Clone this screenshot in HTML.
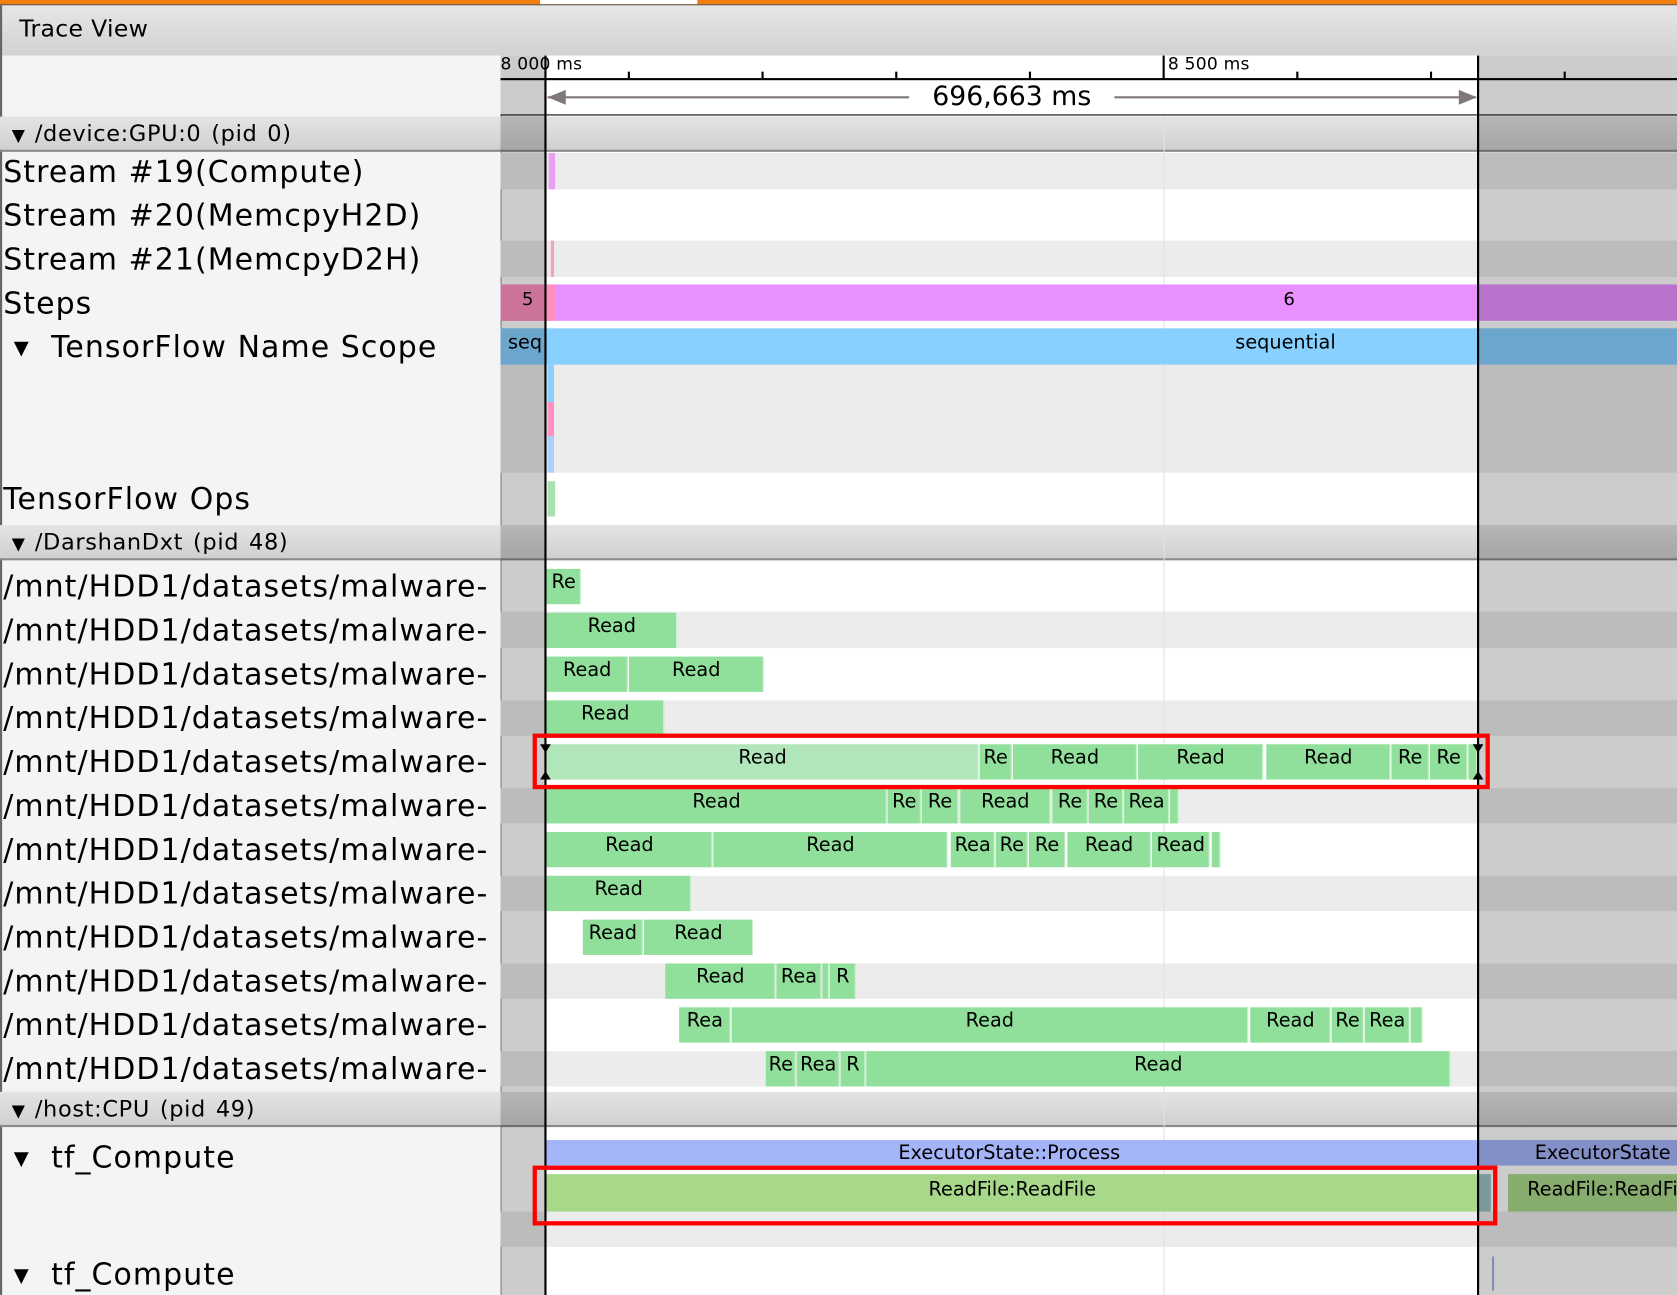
<!DOCTYPE html>
<html><head><meta charset="utf-8"><style>
html,body{margin:0;padding:0;width:1677px;height:1295px;overflow:hidden;background:#fff}
#w{position:absolute;left:0;top:0;width:1568px;height:1211px;transform:scale(1.06952,1.06935);transform-origin:0 0;font-family:"DejaVu Sans","Liberation Sans",sans-serif;overflow:hidden;background:#fff}
.a{position:absolute}
.lbl{position:absolute;left:3px;font-size:28px;color:#000;white-space:nowrap;line-height:34px;letter-spacing:1px}
.hdr{position:absolute;left:0;width:1568px;height:31px;background:linear-gradient(#e4e4e4,#d0d0d0);border-bottom:2px solid #8a8a8a}
.hdr span{position:absolute;left:11px;top:2px;font-size:21px;line-height:28px;letter-spacing:0.6px;word-spacing:2px}
.g{position:absolute;left:468px;width:1100px;background:#ececec}
.b{position:absolute;height:33px;background:#90df9a;font-size:18px;line-height:25px;text-align:center;overflow:hidden;white-space:nowrap;box-shadow:inset -1px 0 0 #c8f0cc}
</style></head><body><div id="w">
<div class="a" style="left:0;top:0;width:1568px;height:5px;background:#f07f10"></div>
<div class="a" style="left:505px;top:0;width:147px;height:4px;background:#fff"></div>
<div class="a" style="left:0;top:4px;width:1568px;height:1px;background:#555"></div>
<div class="a" style="left:0;top:5px;width:1568px;height:47px;background:linear-gradient(#e6e6e6,#d2d2d2)"></div>
<div class="a" style="left:18px;top:14px;font-size:22px;line-height:28px;letter-spacing:0.3px">Trace View</div>
<div class="a" style="left:0;top:52px;width:468px;height:1159px;background:#f3f4f6"></div>
<div class="a" style="left:0;top:5px;width:2px;height:1206px;background:#666"></div>
<div class="a" style="left:468px;top:52px;width:1px;height:1159px;background:#999"></div>
<!-- ruler -->
<div class="a" style="left:468px;top:52px;width:1100px;height:56px;background:#fff"></div>
<div class="a" style="left:468px;top:73px;width:1100px;height:2px;background:#000"></div>
<div class="a" style="left:468px;top:107px;width:1100px;height:1px;background:#000"></div>
<div class="a" style="left:468px;top:50px;font-size:16px;letter-spacing:0.2px">8 000 ms</div>
<div class="a" style="left:1092px;top:50px;font-size:16px;letter-spacing:0.2px">8 500 ms</div>
<div class="a" style="left:1087px;top:52px;width:2px;height:22px;background:#000"></div>
<div class="a" style="left:587px;top:67px;width:2px;height:6px;background:#000"></div>
<div class="a" style="left:712px;top:67px;width:2px;height:6px;background:#000"></div>
<div class="a" style="left:837px;top:67px;width:2px;height:6px;background:#000"></div>
<div class="a" style="left:962px;top:67px;width:2px;height:6px;background:#000"></div>
<div class="a" style="left:1212px;top:67px;width:2px;height:6px;background:#000"></div>
<div class="a" style="left:1337px;top:67px;width:2px;height:6px;background:#000"></div>
<div class="a" style="left:1462px;top:67px;width:2px;height:6px;background:#000"></div>
<div class="a" style="left:512px;top:90px;width:338px;height:2px;background:#807878"></div>
<div class="a" style="left:1042px;top:90px;width:338px;height:2px;background:#807878"></div>
<div class="a" style="left:512px;top:84px;width:0;height:0;border-top:7px solid transparent;border-bottom:7px solid transparent;border-right:17px solid #807878"></div>
<div class="a" style="left:1364px;top:84px;width:0;height:0;border-top:7px solid transparent;border-bottom:7px solid transparent;border-left:17px solid #807878"></div>
<div class="a" style="left:850px;top:74px;width:192px;text-align:center;font-size:25px;line-height:32px">696,663 ms</div>
<!-- headers -->
<div class="hdr" style="top:109px"><span><span style="position:static;font-size:16px;letter-spacing:0">▼</span> /device:GPU:0 (pid 0)</span></div>
<div class="hdr" style="top:491px"><span><span style="position:static;font-size:16px;letter-spacing:0">▼</span> /DarshanDxt (pid 48)</span></div>
<div class="hdr" style="top:1021px"><span><span style="position:static;font-size:16px;letter-spacing:0">▼</span> /host:CPU (pid 49)</span></div>
<!-- stripes -->
<div class="g" style="top:143px;height:34px"></div>
<div class="g" style="top:225px;height:34px"></div>
<div class="g" style="top:341px;height:101px"></div>
<div class="g" style="top:572px;height:34px"></div>
<div class="g" style="top:655px;height:33px"></div>
<div class="g" style="top:737px;height:33px"></div>
<div class="g" style="top:819px;height:33px"></div>
<div class="g" style="top:901px;height:33px"></div>
<div class="g" style="top:983px;height:33px"></div>
<div class="g" style="top:1133px;height:33px"></div>
<div class="a" style="left:1088px;top:108px;width:1px;height:1103px;background:#e2e2e2"></div>
<!-- GPU bars -->
<div class="a" style="left:513px;top:143px;width:6px;height:34px;background:#e8a0f0"></div>
<div class="a" style="left:515px;top:225px;width:3px;height:34px;background:#f4a0c8"></div>
<div class="a" style="left:468px;top:266px;width:1100px;height:34px;background:#e890ff"></div>
<div class="a" style="left:468px;top:266px;width:51px;height:34px;background:#ff90c0"></div>
<div class="a" style="left:488px;top:270px;font-size:17px">5</div>
<div class="a" style="left:1200px;top:270px;font-size:17px">6</div>
<div class="a" style="left:468px;top:307px;width:1100px;height:34px;background:#87d0ff"></div>
<div class="a" style="left:475px;top:310px;font-size:18px">seq</div>
<div class="a" style="left:1155px;top:310px;font-size:18px">sequential</div>
<div class="a" style="left:512px;top:341px;width:6px;height:35px;background:#87d0ff"></div>
<div class="a" style="left:512px;top:376px;width:6px;height:32px;background:#ff90c0"></div>
<div class="a" style="left:512px;top:408px;width:6px;height:34px;background:#a8d0ff"></div>
<div class="a" style="left:512px;top:450px;width:7px;height:33px;background:#a8e0b0"></div>
<!-- labels -->
<div class="lbl" style="top:144px">Stream #19(Compute)</div>
<div class="lbl" style="top:185px">Stream #20(MemcpyH2D)</div>
<div class="lbl" style="top:226px">Stream #21(MemcpyD2H)</div>
<div class="lbl" style="top:267px">Steps</div>
<div class="lbl" style="top:308px">&nbsp;▾&nbsp; TensorFlow Name Scope</div>
<div class="lbl" style="top:450px">TensorFlow Ops</div>
<div class="lbl" style="top:532px">/mnt/HDD1/datasets/malware-</div>
<div class="lbl" style="top:573px">/mnt/HDD1/datasets/malware-</div>
<div class="lbl" style="top:614px">/mnt/HDD1/datasets/malware-</div>
<div class="lbl" style="top:655px">/mnt/HDD1/datasets/malware-</div>
<div class="lbl" style="top:696px">/mnt/HDD1/datasets/malware-</div>
<div class="lbl" style="top:737px">/mnt/HDD1/datasets/malware-</div>
<div class="lbl" style="top:778px">/mnt/HDD1/datasets/malware-</div>
<div class="lbl" style="top:819px">/mnt/HDD1/datasets/malware-</div>
<div class="lbl" style="top:860px">/mnt/HDD1/datasets/malware-</div>
<div class="lbl" style="top:901px">/mnt/HDD1/datasets/malware-</div>
<div class="lbl" style="top:942px">/mnt/HDD1/datasets/malware-</div>
<div class="lbl" style="top:983px">/mnt/HDD1/datasets/malware-</div>
<div class="lbl" style="top:1066px">&nbsp;▾&nbsp; tf_Compute</div>
<div class="lbl" style="top:1175px">&nbsp;▾&nbsp; tf_Compute</div>
<!-- darshan bars -->
<div class="b" style="top:532px;left:511px;width:32px">Re</div>
<div class="b" style="top:573px;left:511px;width:122px">Read</div>
<div class="b" style="top:614px;left:511px;width:76px">Read</div><div class="b" style="top:614px;left:588px;width:126px">Read</div>
<div class="b" style="top:655px;left:511px;width:110px">Read</div>
<div class="b" style="top:696px;left:511px;width:404px;background:#b0e6ba">Read</div><div class="b" style="top:696px;left:916px;width:30px">Re</div><div class="b" style="top:696px;left:947px;width:116px">Read</div><div class="b" style="top:696px;left:1064px;width:117px">Read</div><div class="b" style="top:696px;left:1184px;width:116px">Read</div><div class="b" style="top:696px;left:1301px;width:35px">Re</div><div class="b" style="top:696px;left:1337px;width:35px">Re</div><div class="b" style="top:696px;left:1373px;width:8px"></div>
<div class="b" style="top:737px;left:511px;width:318px">Read</div><div class="b" style="top:737px;left:830px;width:31px">Re</div><div class="b" style="top:737px;left:862px;width:34px">Re</div><div class="b" style="top:737px;left:898px;width:84px">Read</div><div class="b" style="top:737px;left:984px;width:33px">Re</div><div class="b" style="top:737px;left:1018px;width:32px">Re</div><div class="b" style="top:737px;left:1051px;width:42px">Rea</div><div class="b" style="top:737px;left:1094px;width:8px"></div>
<div class="b" style="top:778px;left:511px;width:155px">Read</div><div class="b" style="top:778px;left:667px;width:219px">Read</div><div class="b" style="top:778px;left:889px;width:41px">Rea</div><div class="b" style="top:778px;left:931px;width:30px">Re</div><div class="b" style="top:778px;left:962px;width:34px">Re</div><div class="b" style="top:778px;left:998px;width:78px">Read</div><div class="b" style="top:778px;left:1077px;width:54px">Read</div><div class="b" style="top:778px;left:1133px;width:8px"></div>
<div class="b" style="top:819px;left:511px;width:135px">Read</div>
<div class="b" style="top:860px;left:545px;width:56px">Read</div><div class="b" style="top:860px;left:602px;width:102px">Read</div>
<div class="b" style="top:901px;left:622px;width:103px">Read</div><div class="b" style="top:901px;left:726px;width:42px">Rea</div><div class="b" style="top:901px;left:769px;width:6px"></div><div class="b" style="top:901px;left:776px;width:24px">R</div>
<div class="b" style="top:942px;left:635px;width:48px">Rea</div><div class="b" style="top:942px;left:684px;width:483px">Read</div><div class="b" style="top:942px;left:1169px;width:75px">Read</div><div class="b" style="top:942px;left:1245px;width:30px">Re</div><div class="b" style="top:942px;left:1276px;width:42px">Rea</div><div class="b" style="top:942px;left:1319px;width:11px"></div>
<div class="b" style="top:983px;left:716px;width:28px">Re</div><div class="b" style="top:983px;left:745px;width:40px">Rea</div><div class="b" style="top:983px;left:786px;width:23px">R</div><div class="b" style="top:983px;left:810px;width:546px">Read</div>
<!-- CPU -->
<div class="a" style="left:511px;top:1066px;width:1057px;height:24px;background:#a4b4f9;font-size:18px;line-height:26px;white-space:nowrap"><span style="position:absolute;left:329px">ExecutorState::Process</span><span style="position:absolute;left:924px">ExecutorState</span></div>
<div class="a" style="left:511px;top:1098px;width:871px;height:35px;background:#a8d88a;font-size:18px;line-height:30px;text-align:center">ReadFile:ReadFile</div>
<div class="a" style="left:1382px;top:1098px;width:12px;height:35px;background:#9ac0c0"></div>
<div class="a" style="left:1410px;top:1098px;width:158px;height:35px;background:#a8d88a;font-size:18px;line-height:30px;white-space:nowrap;overflow:hidden;padding-left:18px;box-sizing:border-box">ReadFile:ReadFile</div>
<div class="a" style="left:1395px;top:1175px;width:2px;height:32px;background:#a4b4e0"></div>
<!-- overlays -->
<div class="a" style="left:468px;top:52px;width:42px;height:1159px;background:rgba(0,0,0,0.2)"></div>
<div class="a" style="left:1382px;top:52px;width:186px;height:1159px;background:rgba(0,0,0,0.2)"></div>
<div class="a" style="left:509px;top:52px;width:2px;height:1159px;background:#000"></div>
<div class="a" style="left:1381px;top:52px;width:2px;height:1159px;background:#000"></div>
<!-- selection markers -->
<div class="a" style="left:505px;top:696px;width:0;height:0;border-left:5px solid transparent;border-right:5px solid transparent;border-top:8px solid #000"></div>
<div class="a" style="left:505px;top:721px;width:0;height:0;border-left:5px solid transparent;border-right:5px solid transparent;border-bottom:8px solid #000"></div>
<div class="a" style="left:1377px;top:696px;width:0;height:0;border-left:5px solid transparent;border-right:5px solid transparent;border-top:8px solid #000"></div>
<div class="a" style="left:1377px;top:721px;width:0;height:0;border-left:5px solid transparent;border-right:5px solid transparent;border-bottom:8px solid #000"></div>
<!-- red boxes -->
<div class="a" style="left:498px;top:686px;width:887px;height:44px;border:4px solid #f00"></div>
<div class="a" style="left:498px;top:1090px;width:894px;height:48px;border:4px solid #f00"></div>
</div></body></html>
